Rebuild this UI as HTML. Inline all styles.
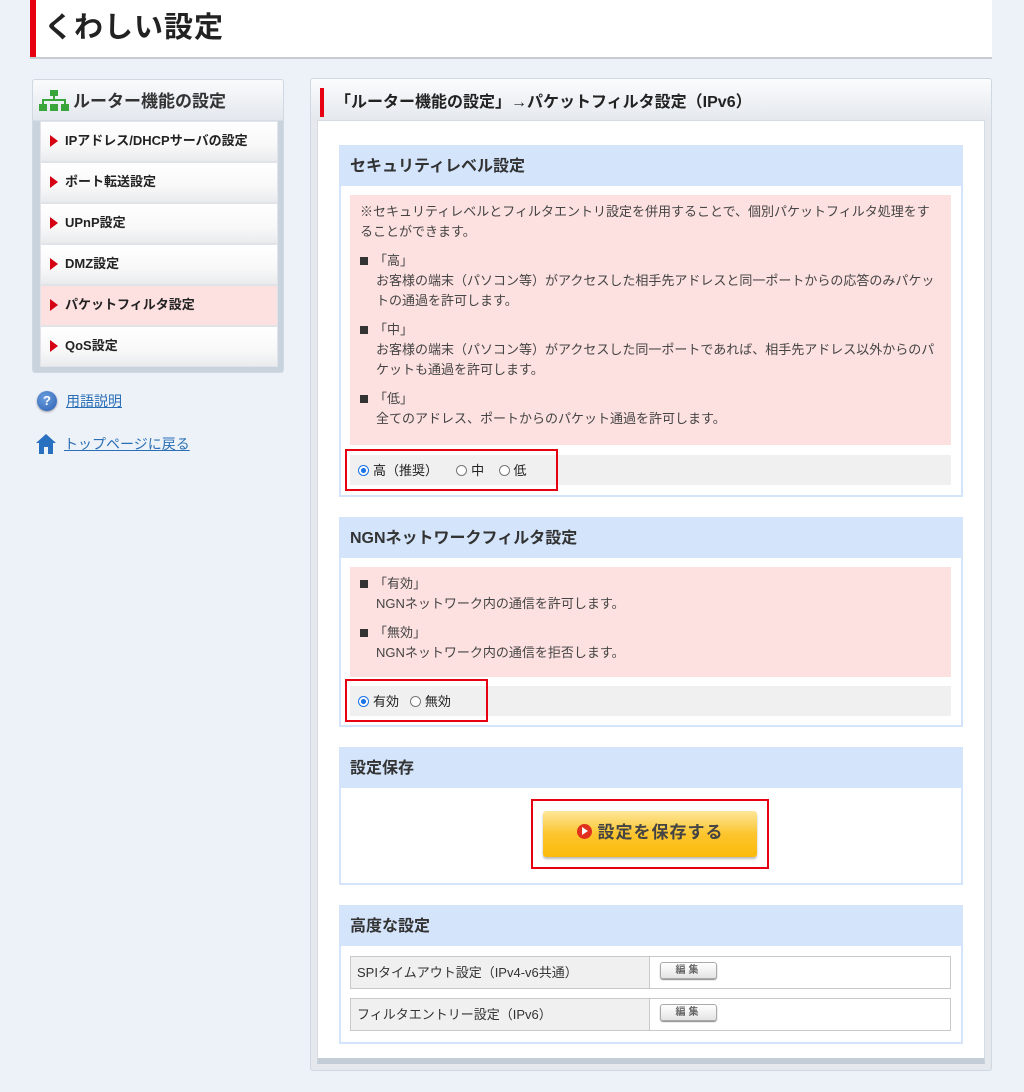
<!DOCTYPE html>
<html><head><meta charset="utf-8"><style>
*{margin:0;padding:0;box-sizing:border-box}
body{width:1024px;height:1092px;background:#edf2f9;font-family:"Liberation Sans","Noto Sans CJK JP",sans-serif;color:#333;position:relative;overflow:hidden}
.a{position:absolute}
.hdr{left:30px;top:0;width:962px;height:59px;background:#fff;border-bottom:2px solid #c8ccd2}
.hdr .bar{left:0;top:0;width:6px;height:57px;background:#e60012}
.hdr h1{position:absolute;left:14px;top:4px;font-size:29px;font-weight:bold;color:#222;letter-spacing:1px}
.lp{left:32px;top:79px;width:252px;height:294px;border:1px solid #d0d8e2;border-radius:3px;background:linear-gradient(#fafbfc,#e3e8ee 40px,#c9d3de 41px,#c9d3de);}
.lp .t{position:absolute;left:40px;top:7px;font-size:17px;font-weight:bold;color:#333}
.item{position:absolute;left:7px;width:238px;height:41px;border:1px solid #e0e4e8;background:linear-gradient(#fff,#f8f8f8 60%,#e9ebed);font-size:13px;font-weight:bold;color:#222;padding:0 0 0 24px;line-height:38px}
.item:before{content:"";position:absolute;left:9px;top:13px;border-left:8px solid #d50012;border-top:6px solid transparent;border-bottom:6px solid transparent}
.item.on{background:#fde0e0}
.lnk{font-size:14px;color:#2a6fb5;text-decoration:underline}
.mp{left:310px;top:78px;width:682px;height:993px;border:1px solid #d0d8e2;border-radius:3px;background:linear-gradient(#fbfcfd,#e5e9ee 40px);}
.mp .in{position:absolute;left:6px;top:41px;width:668px;height:944px;background:#fff;border:1px solid #d6dbe1;border-bottom:6px solid #c3cdd8}
.mp .ttl{position:absolute;left:24px;top:9px;font-size:16px;font-weight:bold;color:#222}
.mp .rb{position:absolute;left:9px;top:9px;width:4px;height:29px;background:#e60012}
.sec{position:absolute;left:339px;width:624px;border:2px solid #d3e4fb;background:#fff}
.sec .h{height:39px;background:#d3e4fb;font-size:16px;font-weight:bold;color:#333;padding:5px 0 0 9px}
.pink{position:absolute;left:9px;width:601px;background:#fde0e0;font-size:13px;color:#444;line-height:20px;padding:7px 10px}
.pink p{margin-bottom:9px}
.pink .b{padding-left:14px;position:relative;display:block}
.pink .b:before{content:"";position:absolute;left:0;top:6px;width:8px;height:8px;background:#333}
.pink .i{padding-left:16px;display:block;padding-right:4px}
.radio{position:absolute;left:9px;width:601px;height:30px;background:#f0f0f0;font-size:13px;color:#222;padding:5px 0 0 8px}
.r{display:inline-block;width:11px;height:11px;border:1px solid #777;border-radius:50%;vertical-align:-1px;margin-right:4px;background:#fff}
.r.on{border-color:#1a73e8;background:radial-gradient(#1a73e8 35%,#fff 45%)}
.red{position:absolute;border:2px solid #e60012}
.tbl{position:absolute;left:9px;width:601px;height:33px;border:1px solid #c8c8c8;font-size:13px;color:#333}
.tbl .c1{position:absolute;left:0;top:0;width:299px;height:31px;background:#f0f0f0;border-right:1px solid #c8c8c8;padding:5px 0 0 6px}
.ed{position:absolute;left:309px;top:5px;width:57px;height:17px;border:1px solid #aaa;border-radius:3px;background:linear-gradient(#fff,#e4e4e4);box-shadow:0 1px 1px #888;font-size:10px;font-weight:bold;color:#666;text-align:center;line-height:15px;letter-spacing:3px}
.btn{position:absolute;left:202px;top:62px;width:214px;height:46px;border-radius:3px;background:linear-gradient(#fde79a,#fcc52e 50%,#fbbb0a);box-shadow:0 2px 2px #bbb;font-size:17px;font-weight:bold;color:#444;text-align:center;line-height:44px;letter-spacing:1px}
.btn i{display:inline-block;width:15px;height:15px;border-radius:50%;background:#e0301e;vertical-align:-1px;margin-right:6px;position:relative}
.btn i:after{content:"";position:absolute;left:5px;top:3px;border-left:6px solid #fff;border-top:4px solid transparent;border-bottom:4px solid transparent}
</style></head><body>
<div class="a hdr"><div class="a bar"></div><h1>くわしい設定</h1></div>

<div class="a lp">
<svg class="a" style="left:6px;top:10px" width="30" height="22" viewBox="0 0 30 22"><rect x="11" y="0" width="8" height="6" fill="#3aa53a"/><rect x="14" y="6" width="2" height="5" fill="#3aa53a"/><rect x="3" y="9" width="24" height="2" fill="#3aa53a"/><rect x="3" y="9" width="2" height="5" fill="#3aa53a"/><rect x="25" y="9" width="2" height="5" fill="#3aa53a"/><rect x="0" y="14" width="8" height="7" fill="#3aa53a"/><rect x="11" y="14" width="8" height="7" fill="#3aa53a"/><rect x="22" y="14" width="8" height="7" fill="#3aa53a"/></svg>
<div class="t">ルーター機能の設定</div>
<div class="item" style="top:41px">IPアドレス/DHCPサーバの設定</div>
<div class="item" style="top:82px">ポート転送設定</div>
<div class="item" style="top:123px">UPnP設定</div>
<div class="item" style="top:164px">DMZ設定</div>
<div class="item on" style="top:205px">パケットフィルタ設定</div>
<div class="item" style="top:246px">QoS設定</div>
</div>

<div class="a" style="left:37px;top:391px;width:20px;height:20px;border-radius:50%;background:radial-gradient(circle at 40% 35%,#6a9fe0,#2c5fb0);box-shadow:0 1px 2px #999;color:#fff;font-weight:bold;font-size:13px;text-align:center;line-height:20px">?</div>
<div class="a lnk" style="left:66px;top:391px">用語説明</div>
<svg class="a" style="left:36px;top:433px" width="20" height="22" viewBox="0 0 20 22"><path d="M10 1 L0 10 L3 10 L3 21 L8 21 L8 14 L12 14 L12 21 L17 21 L17 10 L20 10 Z" fill="#2a70c0"/></svg>
<div class="a lnk" style="left:64px;top:434px">トップページに戻る</div>

<div class="a mp"><div class="rb"></div><div class="ttl">「ルーター機能の設定」→パケットフィルタ設定（IPv6）</div><div class="in"></div></div>

<div class="sec" style="top:145px;height:352px">
<div class="h">セキュリティレベル設定</div>
<div class="pink" style="top:48px;height:250px">
<p>※セキュリティレベルとフィルタエントリ設定を併用することで、個別パケットフィルタ処理をすることができます。</p>
<p><span class="b">「高」</span><span class="i">お客様の端末（パソコン等）がアクセスした相手先アドレスと同一ポートからの応答のみパケットの通過を許可します。</span></p>
<p><span class="b">「中」</span><span class="i">お客様の端末（パソコン等）がアクセスした同一ポートであれば、相手先アドレス以外からのパケットも通過を許可します。</span></p>
<p><span class="b">「低」</span><span class="i">全てのアドレス、ポートからのパケット通過を許可します。</span></p>
</div>
<div class="radio" style="top:308px"><span class="r on"></span>高（推奨）&nbsp;&nbsp;&nbsp;&nbsp;&nbsp;<span class="r"></span>中&nbsp;&nbsp;&nbsp;&nbsp;<span class="r"></span>低</div>
</div>
<div class="red" style="left:345px;top:449px;width:213px;height:42px"></div>

<div class="sec" style="top:517px;height:210px">
<div class="h">NGNネットワークフィルタ設定</div>
<div class="pink" style="top:48px;height:110px">
<p><span class="b">「有効」</span><span class="i">NGNネットワーク内の通信を許可します。</span></p>
<p><span class="b">「無効」</span><span class="i">NGNネットワーク内の通信を拒否します。</span></p>
</div>
<div class="radio" style="top:167px"><span class="r on"></span>有効&nbsp;&nbsp;&nbsp;<span class="r"></span>無効</div>
</div>
<div class="red" style="left:345px;top:679px;width:143px;height:43px"></div>

<div class="sec" style="top:747px;height:138px">
<div class="h">設定保存</div>
<div class="btn"><i></i>設定を保存する</div>
</div>
<div class="red" style="left:531px;top:799px;width:238px;height:70px"></div>

<div class="sec" style="top:905px;height:139px">
<div class="h">高度な設定</div>
<div class="tbl" style="top:49px"><div class="c1">SPIタイムアウト設定（IPv4-v6共通）</div><div class="ed">編集</div></div>
<div class="tbl" style="top:91px"><div class="c1">フィルタエントリー設定（IPv6）</div><div class="ed">編集</div></div>
</div>
</body></html>
